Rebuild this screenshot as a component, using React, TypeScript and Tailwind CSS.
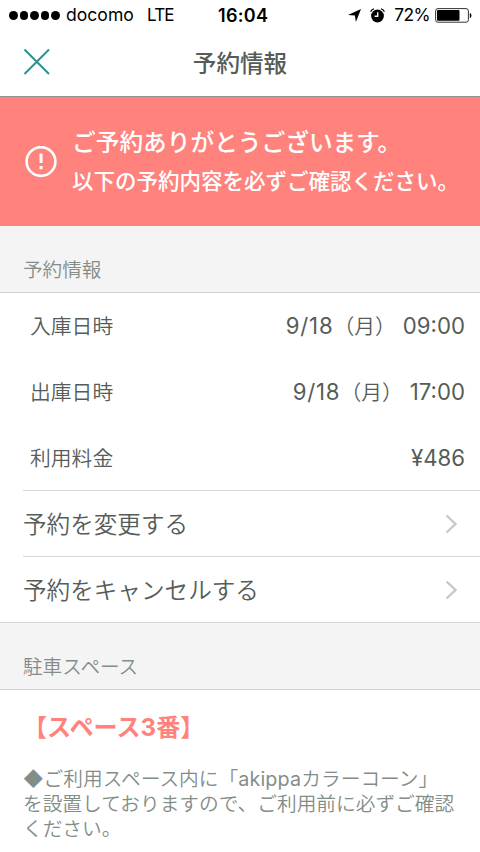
import type { ReactNode } from "react";

const details = [
  { label: "入庫日時", date: "9/18", day: "（月）", value: "09:00" },
  { label: "出庫日時", date: "9/18", day: "（月）", value: "17:00" },
  { label: "利用料金", value: "¥486" },
];

const actions = ["予約を変更する", "予約をキャンセルする"];

function StatusBar() {
  return (
    <div className="relative flex h-[30px] items-center justify-between pt-px pr-2 pl-[9px] text-[17px] text-black">
      <div className="flex items-center">
        <div className="flex gap-[2px]">
          {[0, 1, 2, 3, 4].map((dot) => (
            <span key={dot} className="size-[8.6px] rounded-full bg-black" />
          ))}
        </div>
        <span className="ml-[6px] w-[81px] text-[17.6px]">docomo</span>
        <span className="text-[17px] tracking-[-0.8px]">LTE</span>
      </div>
      <span className="absolute left-[218px] text-[18px] font-semibold tracking-[0.3px]">16:04</span>
      <div className="flex items-center">
        <svg width="13" height="13" viewBox="0 0 13 13" className="mr-[9px]">
          <path d="M13 0 7.9 13 6.9 6.4 0 5.9z" fill="currentColor" />
        </svg>
        <svg width="15" height="15" viewBox="0 0 15 15" className="mr-[9px]">
          <circle cx="7.5" cy="8" r="6.4" fill="#000" />
          <path d="M.6 3.8A4.5 4.5 0 0 1 4 .8M11 .8A4.5 4.5 0 0 1 14.4 3.8" fill="none" stroke="#000" strokeWidth="1.2" />
          <path d="M7.7 4.2v4.1H4.6" fill="none" stroke="#fff" strokeWidth="1.4" />
        </svg>
        <span className="mr-[5px] text-[17.4px] tracking-[-0.6px]">72%</span>
        <svg width="37" height="15" viewBox="0 0 37 15">
          <rect x=".6" y=".6" width="32.8" height="13.6" rx="2.4" fill="none" stroke="#333" strokeWidth="1" />
          <rect x="2" y="2" width="22.5" height="10.8" rx="1" />
          <path d="M34.8 5v5c2.2-.6 2.2-4.4 0-5" />
        </svg>
      </div>
    </div>
  );
}

function SectionHeader({ children }: { children: ReactNode }) {
  return (
    <h2 className="flex h-[67px] items-end border-b border-[#d0d0d0] bg-[#f4f4f4] pb-[8px] pl-[23px] text-[19.6px] leading-[28px] font-[350] text-[#838d88]">
      {children}
    </h2>
  );
}

export default function App() {
  return (
    <div className="h-[852px] w-[480px] overflow-hidden bg-white font-['Inter','Noto_Sans_CJK_JP',sans-serif] text-[#555c59]" lang="ja">
      <StatusBar />
      <header className="relative flex h-[67px] items-center justify-center border-b border-[#929292] pt-px">
        <svg className="absolute top-[18px] left-[23px]" width="28" height="28" viewBox="0 0 28 28">
          <path d="m1.5 1.5 24.5 24.5M26 1.5 1.5 26" stroke="#2a9290" strokeWidth="2" />
        </svg>
        <h1 className="text-[23.6px] font-medium">予約情報</h1>
      </header>

      <div className="flex h-[129px] items-center bg-[#ff827c] pl-[25px] text-white">
        <svg width="32" height="32" viewBox="0 0 32 32" className="mr-[15px] shrink-0">
          <circle cx="16" cy="15.5" r="14.4" fill="none" stroke="#fff" strokeWidth="2.6" />
          <path d="M16 7.5v9.4M16 20v3.2" stroke="#fff" strokeWidth="3" />
        </svg>
        <div className="font-medium whitespace-nowrap">
          <p className="text-[23.7px] leading-[39px]">ご予約ありがとうございます。</p>
          <p className="text-[21.5px] leading-[38px]">以下の予約内容を必ずご確認ください。</p>
        </div>
      </div>

      <SectionHeader>予約情報</SectionHeader>
      <dl className="-mb-px">
        {details.map((row) => (
          <div key={row.label} className="flex h-[66px] items-center justify-between pr-[15px] pl-[30px]">
            <dt className="pt-[2px] text-[20.8px] font-[350]">{row.label}</dt>
            <dd className="flex items-baseline text-[22.2px]">
              {row.date && <span className="tracking-[0.8px]">{row.date}</span>}
              {row.day && <span className="mr-[7px] text-[20.8px] font-[350]">{row.day}</span>}
              <span>{row.value}</span>
            </dd>
          </div>
        ))}
      </dl>
      <ul className="border-b border-[#d8d8d8]">
        {actions.map((action) => (
          <li key={action} className="ml-[23px] flex h-[66px] items-center justify-between border-t border-[#d8d8d8] pr-[22px] text-[23.6px] font-[350]">
            <span className="pt-[2px]">{action}</span>
            <svg width="13" height="20" viewBox="0 0 13 20">
              <path d="m1.5 1.5 9 8.5-9 8.5" fill="none" stroke="#c7c7cc" strokeWidth="2.4" />
            </svg>
          </li>
        ))}
      </ul>

      <SectionHeader>駐車スペース</SectionHeader>
      <section className="pt-[19px] pl-[23px]">
        <p className="text-[24.1px] leading-[38px] font-bold text-[#ff827c]">【スペース3番】</p>
        <p className="mt-[20px] text-[19.7px] leading-[25px] font-[350] whitespace-nowrap text-[#838d88]">
          ◆ご利用スペース内に「<span className="font-normal tracking-[0.2px]">akippa</span>カラーコーン」
          <br />
          を設置しておりますので、ご利用前に必ずご確認
          <br />
          ください。
        </p>
      </section>
    </div>
  );
}
